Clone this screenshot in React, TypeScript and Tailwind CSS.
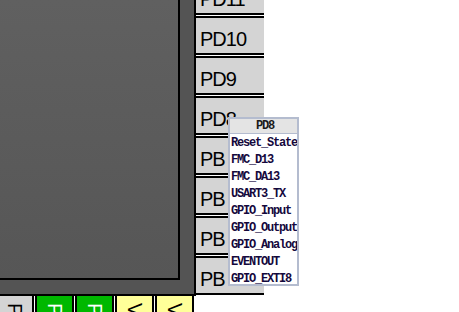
const sidePins = ["PD11", "PD10", "PD9", "PD8", "PB", "PB", "PB", "PB"];

const bottomPins = [
  { label: "PE1", kind: "plain" },
  { label: "PB9", kind: "active" },
  { label: "PB8", kind: "active" },
  { label: "VSS", kind: "power" },
  { label: "VDD", kind: "power" },
];

const altFunctions = [
  "Reset_State",
  "FMC_D13",
  "FMC_DA13",
  "USART3_TX",
  "GPIO_Input",
  "GPIO_Output",
  "GPIO_Analog",
  "EVENTOUT",
  "GPIO_EXTI8",
];

export default function App() {
  return (
    <div className="relative w-[459px] h-[312px] overflow-hidden bg-white font-['Liberation_Sans',sans-serif]">
      {/* chip body + right-side pins */}
      <div className="flex h-[296px]">
        <div className="w-[196px] h-[296px] shrink-0 bg-[#545454] border-r-2 border-b-2 border-black">
          <div className="w-[180px] h-[280px] bg-gradient-to-b from-[#606060] to-[#565656] border-r-2 border-b-2 border-black" />
        </div>
        <div className="w-[68px] shrink-0 flex flex-col gap-px -mt-[24px]">
          {sidePins.map((name, i) => (
            <div
              key={i}
              className="h-[39px] shrink-0 bg-[#d4d4d4] border-t-2 border-b-2 border-black pl-[4px] pt-[11px] text-[20px] leading-[20px] tracking-[-1px] text-black"
            >
              {name}
            </div>
          ))}
        </div>
      </div>

      {/* bottom pins, only their tops are in view; labels are turned a quarter clockwise */}
      <div className="flex gap-px -ml-[5px] h-[16px]">
        {bottomPins.map((pin, i) => (
          <div
            key={i}
            className={`w-[39px] h-[40px] shrink-0 border-x-2 border-black flex justify-center pt-[17px] ${
              pin.kind === "active"
                ? "bg-[#00b800] text-white"
                : pin.kind === "power"
                ? "bg-[#ffff99] text-black"
                : "bg-[#d4d4d4] text-black"
            }`}
          >
            <span className="block w-[40px] h-[20px] shrink-0 rotate-90 whitespace-nowrap text-left text-[20px] leading-[20px]">
              {pin.label}
            </span>
          </div>
        ))}
      </div>

      {/* pin function popup */}
      <div className="absolute left-[228px] top-[117px] w-[71px] h-[169px] overflow-hidden bg-white border-2 border-[#b4bccf] font-['Liberation_Mono',monospace] font-bold text-[12px] tracking-[-1.2px] text-[#14083c]">
        <div className="h-[15px] bg-[#e4e4e4] border-b border-[#b4bccf] flex items-center justify-center pl-[3px] text-[#1a1a1a]">
          PD8
        </div>
        {altFunctions.map((fn) => (
          <div key={fn} className="h-[17px] flex items-center pl-px whitespace-nowrap">
            {fn}
          </div>
        ))}
      </div>
    </div>
  );
}
